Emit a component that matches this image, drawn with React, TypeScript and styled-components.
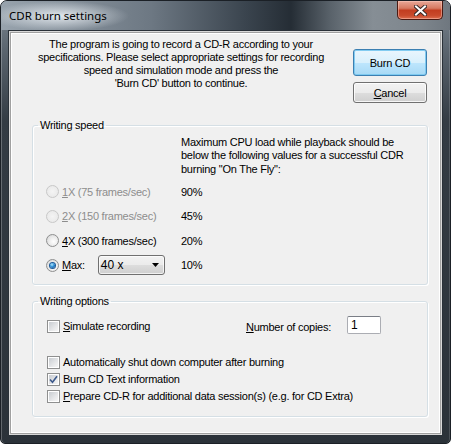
import React from 'react';
import styled, { createGlobalStyle } from 'styled-components';

const GlobalStyle = createGlobalStyle`
    html, body {
        margin: 0;
        padding: 0;
        background: #ffffff;
    }
    body {
        font-family: "Liberation Sans", Arial, sans-serif;
        font-size: 11px;
        color: #000;
    }
`;

const Window = styled.div`
    width: 451px;
    height: 444px;
    box-sizing: border-box;
    border: 1px solid #1b2026;
    border-radius: 7px 7px 5px 5px;
    background: linear-gradient(to bottom, #7d8892 0px, #5a646e 50px, #343c44 120px, #2b3239 100%);
    box-shadow: inset 1px 0 0 rgba(255, 255, 255, 0.25), inset -1px 0 0 rgba(255, 255, 255, 0.15);
    padding: 0 7px 7px;
    display: flex;
    flex-direction: column;
    overflow: hidden;
`;

const TitleBar = styled.div`
    height: 29px;
    flex: 0 0 29px;
    margin: 0 -7px;
    padding: 0 7px;
    display: flex;
    flex-direction: row;
    align-items: flex-start;
    background:
        radial-gradient(ellipse 70px 15px at 58px 15px, rgba(235, 240, 245, 0.9), rgba(235, 240, 245, 0) 100%),
        linear-gradient(to right, #98a3ad 0px, #6d7883 150px, #3a444e 245px, #252d35 290px, #5a636b 330px, #868e95 372px, #7d858c 420px, #6e767e 451px);
`;

const Title = styled.div`
    font-family: "Noto Sans", "Open Sans", sans-serif;
    font-size: 11.5px;
    line-height: 16px;
    margin-top: 7px;
    padding-left: 1px;
    color: #000;
`;

const CloseButton = styled.div`
    margin-left: auto;
    width: 46px;
    height: 19px;
    box-sizing: border-box;
    border: 1px solid #4a1a12;
    border-top: none;
    border-radius: 0 0 5px 5px;
    background: linear-gradient(to bottom, #e9a898 0%, #d67a62 40%, #c23d20 52%, #c84a2c 80%, #dc6d4e 100%);
    box-shadow: inset 0 0 0 1px rgba(255, 210, 200, 0.45);
    display: flex;
    align-items: center;
    justify-content: center;
`;

const Client = styled.div`
    flex: 1;
    box-sizing: border-box;
    background: #f0f0f0;
    border: 1px solid #2a3138;
    box-shadow: inset 0 0 0 1px #d8d8d8, inset 0 0 0 2px #a0a0a0, inset 0 0 0 3px #ffffff;
    display: flex;
    flex-direction: column;
    letter-spacing: -0.25px;
`;

const Header = styled.div`
    display: flex;
    flex-direction: row;
    align-items: flex-start;
    padding: 7px 0 0 15px;
`;

const Intro = styled.div`
    width: 314px;
    text-align: center;
    line-height: 13px;
`;

const ButtonColumn = styled.div`
    margin: 11px 0 0 15px;
    width: 74px;
    display: flex;
    flex-direction: column;
    gap: 6px;
`;

const PushButton = styled.div<{ primary?: boolean }>`
    height: ${p => (p.primary ? '27px' : '21px')};
    box-sizing: border-box;
    border: 1px solid ${p => (p.primary ? '#3c7fb1' : '#707070')};
    border-radius: 3px;
    background: ${p =>
        p.primary
            ? 'linear-gradient(to bottom, #eaf6fd 0%, #d9f0fc 50%, #bee6fd 51%, #a7d9f5 100%)'
            : 'linear-gradient(to bottom, #f2f2f2 0%, #ebebeb 50%, #dddddd 51%, #cfcfcf 100%)'};
    box-shadow: inset 0 0 0 1px ${p => (p.primary ? 'rgba(120, 200, 240, 0.9)' : 'rgba(255, 255, 255, 0.8)')};
    display: flex;
    align-items: center;
    justify-content: center;
`;

const Group = styled.fieldset<{ top: number }>`
    margin: ${p => p.top}px 14px 0 23px;
    padding: 0;
    border: 1px solid #d5dfe5;
    border-radius: 3px;
    box-shadow: inset 1px 1px 0 #ffffff, 1px 1px 0 #ffffff;
    min-width: 0;
`;

const Legend = styled.legend`
    margin-left: 5px;
    padding: 0 2px;
    line-height: 13px;
    color: #000;
`;

const SpeedBody = styled.div`
    padding: 3.5px 0 6px 13px;
`;

const CpuNote = styled.div`
    margin-left: 135px;
    line-height: 13.5px;
`;

const SpeedGrid = styled.div`
    margin-top: 3.5px;
    display: grid;
    grid-template-columns: 135px auto;
    grid-auto-rows: 24.5px;
    align-items: center;
`;

const OptionLine = styled.div`
    display: flex;
    flex-direction: row;
    align-items: center;
    gap: 3px;
`;

const Caption = styled.span<{ disabled?: boolean }>`
    color: ${p => (p.disabled ? '#8d8d8d' : '#000')};
    white-space: nowrap;
`;

const Key = styled.span`
    text-decoration: underline;
`;

const Percent = styled.span`
    color: #000;
`;

const Radio = styled.span<{ checked?: boolean; disabled?: boolean }>`
    width: 13px;
    height: 13px;
    box-sizing: border-box;
    border-radius: 50%;
    border: 1px solid ${p => (p.disabled ? '#c8c8c8' : '#8e8f8f')};
    background: ${p =>
        p.disabled
            ? 'radial-gradient(circle at 50% 50%, #f4f4f4 0%, #e6e6e6 100%)'
            : 'radial-gradient(circle at 60% 60%, #ffffff 0%, #e8e8e8 55%, #c9cbcd 100%)'};
    display: grid;
    place-items: center;
    flex: 0 0 13px;

    &::after {
        content: '';
        width: 5px;
        height: 5px;
        border-radius: 50%;
        display: ${p => (p.checked ? 'block' : 'none')};
        background: radial-gradient(circle at 40% 35%, #b8ecff 0%, #2c8fd6 45%, #0d3d82 100%);
        box-shadow: 0 0 0 1px #1c5a99;
    }
`;

const MaxSelect = styled.div`
    margin-left: 10px;
    width: 67px;
    height: 20px;
    box-sizing: border-box;
    border: 1px solid #707070;
    border-radius: 3px;
    background: linear-gradient(to bottom, #f2f2f2 0%, #ebebeb 50%, #dddddd 51%, #cfcfcf 100%);
    box-shadow: inset 0 0 0 1px rgba(255, 255, 255, 0.7);
    display: flex;
    align-items: center;
    padding: 0 5px 0 2px;
    font-size: 12px;
    letter-spacing: 0;
`;

const SelectValue = styled.span`
    flex: 1;
`;

const OptionsBody = styled.div`
    padding: 8.5px 0 11.5px 14px;
    display: flex;
    flex-direction: column;
`;

const FirstOptionRow = styled.div`
    height: 20px;
    display: flex;
    flex-direction: row;
    align-items: center;
    margin-bottom: 17.5px;
`;

const CheckRow = styled.div<{ width?: number }>`
    height: 17px;
    display: flex;
    flex-direction: row;
    align-items: center;
    gap: 3px;
    ${p => (p.width ? `flex: 0 0 ${p.width}px;` : '')}
`;

const CopiesLabel = styled.span`
    flex: 0 0 101px;
    padding-top: 2px;
`;

const CopiesInput = styled.div`
    width: 34px;
    height: 18px;
    box-sizing: border-box;
    background: #ffffff;
    border: 1px solid #abadb3;
    border-top-color: #7a7e86;
    border-radius: 2px;
    padding: 1px 0 0 3px;
    font-size: 12px;
    line-height: 14px;
    align-self: flex-start;
`;

const Box = styled.span`
    width: 13px;
    height: 13px;
    flex: 0 0 13px;
    box-sizing: border-box;
    border: 1px solid #8e8f8f;
    background: #ffffff;
    padding: 2px;
    display: flex;

    & > span {
        flex: 1;
        background: linear-gradient(135deg, #c8ccd1 0%, #e6e7e9 60%, #f6f6f6 100%);
        display: flex;
        align-items: center;
        justify-content: center;
        margin: -1px;
    }
`;

const CheckBox: React.FC<{ checked?: boolean }> = ({ checked }) => (
    <Box>
        <span>
            {checked && (
                <svg width="9" height="9" viewBox="0 0 9 9">
                    <path d="M1 4.5 L3.5 7.2 L8 1.2" fill="none" stroke="#3d5a8c" strokeWidth="1.6" />
                </svg>
            )}
        </span>
    </Box>
);

const speeds = [
    { key: '1', rest: 'X (75 frames/sec)', load: '90%', disabled: true },
    { key: '2', rest: 'X (150 frames/sec)', load: '45%', disabled: true },
    { key: '4', rest: 'X (300 frames/sec)', load: '20%', disabled: false },
];

export default function App() {
    return (
        <>
            <GlobalStyle />
            <Window>
                <TitleBar>
                    <Title>CDR burn settings</Title>
                    <CloseButton>
                        <svg width="13" height="11" viewBox="0 0 13 11">
                            <path d="M2 1.5 L11 9.5 M11 1.5 L2 9.5" stroke="#3a2a28" strokeWidth="4" strokeLinecap="square" />
                            <path d="M2 1.5 L11 9.5 M11 1.5 L2 9.5" stroke="#ffffff" strokeWidth="2" strokeLinecap="square" />
                        </svg>
                    </CloseButton>
                </TitleBar>
                <Client>
                    <Header>
                        <Intro>
                            The program is going to record a CD-R according to your<br />
                            specifications. Please select appropriate settings for recording<br />
                            speed and simulation mode and press the<br />
                            'Burn CD' button to continue.
                        </Intro>
                        <ButtonColumn>
                            <PushButton primary>Burn CD</PushButton>
                            <PushButton><span><Key>C</Key>ancel</span></PushButton>
                        </ButtonColumn>
                    </Header>

                    <Group top={16}>
                        <Legend>Writing speed</Legend>
                        <SpeedBody>
                            <CpuNote>
                                Maximum CPU load while playback should be<br />
                                below the following values for a successful CDR<br />
                                burning "On The Fly":
                            </CpuNote>
                            <SpeedGrid>
                                {speeds.map(s => (
                                    <React.Fragment key={s.key}>
                                        <OptionLine>
                                            <Radio disabled={s.disabled} />
                                            <Caption disabled={s.disabled}>
                                                <Key>{s.key}</Key>{s.rest}
                                            </Caption>
                                        </OptionLine>
                                        <Percent>{s.load}</Percent>
                                    </React.Fragment>
                                ))}
                                <OptionLine>
                                    <Radio checked />
                                    <Caption><Key>M</Key>ax:</Caption>
                                    <MaxSelect>
                                        <SelectValue>40 x</SelectValue>
                                        <svg width="7" height="4" viewBox="0 0 7 4">
                                            <path d="M0 0 H7 L3.5 4 Z" fill="#000" />
                                        </svg>
                                    </MaxSelect>
                                </OptionLine>
                                <Percent>10%</Percent>
                            </SpeedGrid>
                        </SpeedBody>
                    </Group>

                    <Group top={10}>
                        <Legend>Writing options</Legend>
                        <OptionsBody>
                            <FirstOptionRow>
                                <CheckRow width={199}>
                                    <CheckBox />
                                    <Caption><Key>S</Key>imulate recording</Caption>
                                </CheckRow>
                                <CopiesLabel><Key>N</Key>umber of copies:</CopiesLabel>
                                <CopiesInput>1</CopiesInput>
                            </FirstOptionRow>
                            <CheckRow>
                                <CheckBox />
                                <Caption>Automatically shut down computer after burning</Caption>
                            </CheckRow>
                            <CheckRow>
                                <CheckBox checked />
                                <Caption>Burn CD Text information</Caption>
                            </CheckRow>
                            <CheckRow>
                                <CheckBox />
                                <Caption><Key>P</Key>repare CD-R for additional data session(s) (e.g. for CD Extra)</Caption>
                            </CheckRow>
                        </OptionsBody>
                    </Group>
                </Client>
            </Window>
        </>
    );
}
